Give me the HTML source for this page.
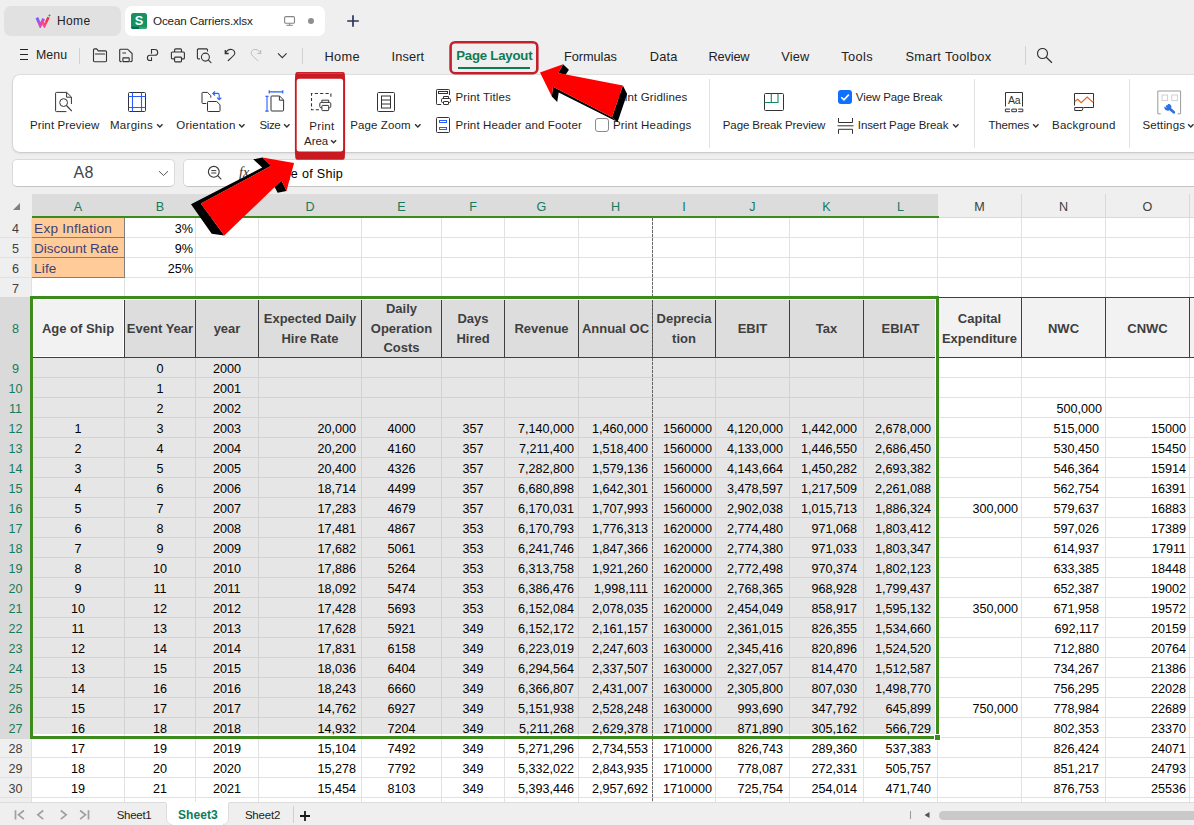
<!DOCTYPE html>
<html lang="en"><head><meta charset="utf-8"><title>Ocean Carriers.xlsx</title>
<style>
html,body{margin:0;padding:0}
body{width:1194px;height:825px;overflow:hidden;background:#efefef;font-family:"Liberation Sans",sans-serif;position:relative}
.b{position:absolute;box-sizing:border-box}
.t{position:absolute;white-space:nowrap}
.c{position:absolute;white-space:nowrap;font-size:12.6px;line-height:20px;height:20px;color:#000}
.h{position:absolute;font-size:13px;line-height:19.65px;font-weight:700;color:#3f3f3f;text-align:center;display:flex;align-items:center;justify-content:center;padding-top:2px}
.rn{position:absolute;left:0;width:31px;text-align:center;font-size:12.6px;line-height:20px;height:20px;color:#404040}
.cn{position:absolute;top:197px;text-align:center;font-size:12.6px;line-height:20px;height:20px;color:#404040}
.g{color:#167a5b}
</style></head>
<body>
<div class="b" style="left:4px;top:6px;width:117px;height:30px;background:#e1e1e1;border-radius:7px"></div>
<div class="b" style="left:125px;top:6px;width:200px;height:30px;background:#fff;border-radius:7px"></div>
<svg class="b" style="left:35px;top:13px;" width="17" height="15" viewBox="0 0 17 15" fill="none"><defs><linearGradient id="wg1" x1="0" y1="0" x2=".6" y2="1"><stop offset="0" stop-color="#6a63ff"/><stop offset="1" stop-color="#ee3fb8"/></linearGradient><linearGradient id="wg2" x1="0" y1="1" x2="1" y2="0"><stop offset="0" stop-color="#ff4fa8"/><stop offset="1" stop-color="#ff2626"/></linearGradient></defs>
<path d="M1.9 4.6L5.3 12.600 8.700 5.600" stroke="url(#wg1)" stroke-width="2.900" stroke-linejoin="miter"/>
<path d="M6.900 8.300L9.400 13 13.500 4.300" stroke="url(#wg2)" stroke-width="2.500" stroke-linejoin="miter"/>
<path d="M14.500 .8l.5 1.100 1.100 .5-1.100 .5-.5 1.100-.5-1.100-1.100-.5 1.100-.5z" fill="#ff3b4e"/></svg>
<div id="L1" class="t" style="left:56.90px;top:12.84px;font-size:12px;line-height:16px;color:#222;font-weight:400;letter-spacing:0.421px;">Home</div>
<svg class="b" style="left:131px;top:13px;" width="16" height="16" viewBox="0 0 16 16" fill="none"><clipPath id="sc"><rect width="16" height="16" rx="2.6"/></clipPath><g clip-path="url(#sc)"><rect width="16" height="16" fill="#14925f"/><rect y="13.800" width="8" height="2.200" fill="#0b6b45"/><rect x="8" y="13.800" width="8" height="2.200" fill="#2ea873"/></g>
<text x="8" y="11.600" text-anchor="middle" font-family="Liberation Sans, sans-serif" font-weight="700" font-size="12.800" fill="#fff">S</text></svg>
<div id="L2" class="t" style="left:153.00px;top:12.95px;font-size:11.7px;line-height:16px;color:#222;font-weight:400;letter-spacing:-0.159px;">Ocean Carriers.xlsx</div>
<svg class="b" style="left:283px;top:15px;" width="14" height="12" viewBox="0 0 14 12" fill="none"><rect x="1.600" y="1.600" width="9.900" height="6.700" rx="1.300" stroke="#858585" stroke-width="1.100"/><path d="M6.550 8.300v2M3.300 10.300h6.500" stroke="#858585" stroke-width="1"/></svg>
<div class="b" style="left:308px;top:18px;width:6.4px;height:6.4px;background:#8e8e8e;border-radius:50%"></div>
<svg class="b" style="left:346px;top:14px;" width="14" height="14" viewBox="0 0 14 14" fill="none"><path d="M7 1.2v11.6M1.2 7h11.6" stroke="#2b3657" stroke-width="1.7"/></svg>
<svg class="b" style="left:19px;top:48px;" width="10" height="13" viewBox="0 0 10 13" fill="none"><path d="M1 1.5h8M1 6.5h8M1 11.5h8" stroke="#222" stroke-width="1"/></svg>
<div id="L3" class="t" style="left:35.90px;top:46.94px;font-size:12.3px;line-height:16px;color:#222;font-weight:400;letter-spacing:0.109px;">Menu</div>
<div class="b" style="left:79px;top:47.5px;width:1px;height:16.5px;background:#d2d2d2"></div>
<svg class="b" style="left:92px;top:47.5px;" width="16" height="15" viewBox="0 0 16 15" fill="none"><path d="M1.5 2a1.1 1.1 0 0 1 1.1-1.1H4.6L6.3 2.9H13.4a1.1 1.1 0 0 1 1.1 1.1V12.7a1.1 1.1 0 0 1-1.1 1.1H2.6a1.1 1.1 0 0 1-1.1-1.1z" stroke="#333" stroke-width="1.1"/><path d="M3.4 6H12.6" stroke="#333" stroke-width="1.1" stroke-linecap="round"/></svg>
<svg class="b" style="left:118px;top:47.5px;" width="16" height="15" viewBox="0 0 16 15" fill="none"><path d="M3.2 13.6H2.7a1 1 0 0 1-1-1V2.2a1 1 0 0 1 1-1H9.6L14.1 5.6V12.6a1 1 0 0 1-1 1H12.6" stroke="#333" stroke-width="1.1" stroke-linecap="round"/><path d="M4.4 5H8" stroke="#333" stroke-width="1"/><rect x="4.9" y="9.9" width="6.3" height="3.7" rx=".4" stroke="#333" stroke-width="1.1"/></svg>
<svg class="b" style="left:146px;top:48px;" width="13" height="14" viewBox="0 0 13 14" fill="none"><path d="M5.5 5.8V1.5H8.8A2.9 2.9 0 0 1 8.8 7.3H4A2.6 2.6 0 0 0 4 12.5H5.5V9.2" stroke="#333" stroke-width="1.1"/></svg>
<svg class="b" style="left:170px;top:47.5px;" width="16" height="15" viewBox="0 0 16 15" fill="none"><path d="M4 10.9H2.4a1 1 0 0 1-1-1V5a1 1 0 0 1 1-1H13.4a1 1 0 0 1 1 1V9.9a1 1 0 0 1-1 1H11.8" stroke="#333" stroke-width="1.1" stroke-linecap="round"/><path d="M4.6 4V1.9a1 1 0 0 1 1-1H10.5a1 1 0 0 1 1 1V4" stroke="#333" stroke-width="1.1"/><rect x="4.6" y="9.1" width="6.9" height="4.8" rx=".8" stroke="#333" stroke-width="1.1"/></svg>
<svg class="b" style="left:196px;top:47.5px;" width="17" height="16" viewBox="0 0 17 16" fill="none"><path d="M3.5 10.900H2.400a1 1 0 0 1-1-1V1.900a1 1 0 0 1 1-1H10.500a1 1 0 0 1 1 1V3" stroke="#333" stroke-width="1.1" stroke-linecap="round"/><circle cx="9.4" cy="9.1" r="4" stroke="#333" stroke-width="1.1"/><path d="M12.4 12.2L15 14.600" stroke="#333" stroke-width="1.1" stroke-linecap="round"/></svg>
<svg class="b" style="left:224px;top:48px;" width="13" height="14" viewBox="0 0 13 14" fill="none"><path d="M1.3 2V5.500H4.700" stroke="#333" stroke-width="1.3"/><path d="M1.700 5C3 2.400 5.500 1.100 7.700 1.500C10.300 2 11.500 4.500 10.400 6.600C9.600 8 6 11 3.800 12.900" stroke="#333" stroke-width="1.1"/></svg>
<svg class="b" style="left:250px;top:48px;" width="13" height="14" viewBox="0 0 13 14" fill="none"><path d="M10.700 2V5.500H7.300" stroke="#bdbdbd" stroke-width="1.2"/><path d="M10.300 5C9 2.400 6.500 1.100 4.300 1.500C1.700 2 .5 4.500 1.600 6.600C2.400 8 6 11 8.200 12.900" stroke="#bdbdbd" stroke-width="1"/></svg>
<svg class="b" style="left:277px;top:52px;" width="11" height="8" viewBox="0 0 11 8" fill="none"><path d="M1 1.400l4.300 4.300 4.300-4.300" stroke="#333" stroke-width="1.100"/></svg>
<div class="b" style="left:302px;top:47.5px;width:1px;height:16.5px;background:#d2d2d2"></div>
<div id="L4" class="t" style="left:324.60px;top:48.56px;font-size:12.8px;line-height:16px;color:#222;font-weight:400;letter-spacing:0.265px;">Home</div>
<div id="L5" class="t" style="left:391.60px;top:48.56px;font-size:12.8px;line-height:16px;color:#222;font-weight:400;letter-spacing:0.114px;">Insert</div>
<div id="L6" class="t" style="left:456.20px;top:48.03px;font-size:13.2px;line-height:16px;color:#107a57;font-weight:700;letter-spacing:-0.202px;">Page Layout</div>
<div class="b" style="left:458px;top:67px;width:72px;height:2px;background:#107a57"></div>
<div id="L7" class="t" style="left:563.90px;top:48.56px;font-size:12.8px;line-height:16px;color:#222;font-weight:400;letter-spacing:-0.055px;">Formulas</div>
<div id="L8" class="t" style="left:649.80px;top:48.56px;font-size:12.8px;line-height:16px;color:#222;font-weight:400;letter-spacing:0.167px;">Data</div>
<div id="L9" class="t" style="left:708.50px;top:48.56px;font-size:12.8px;line-height:16px;color:#222;font-weight:400;letter-spacing:-0.178px;">Review</div>
<div id="L10" class="t" style="left:781.30px;top:48.56px;font-size:12.8px;line-height:16px;color:#222;font-weight:400;letter-spacing:0.146px;">View</div>
<div id="L11" class="t" style="left:841.30px;top:48.56px;font-size:12.8px;line-height:16px;color:#222;font-weight:400;letter-spacing:0.385px;">Tools</div>
<div id="L12" class="t" style="left:905.40px;top:48.56px;font-size:12.8px;line-height:16px;color:#222;font-weight:400;letter-spacing:0.349px;">Smart Toolbox</div>
<div class="b" style="left:1025px;top:46px;width:1px;height:18.5px;background:#d2d2d2"></div>
<svg class="b" style="left:1036px;top:48px;" width="18" height="16" viewBox="0 0 18 16" fill="none"><circle cx="6.500" cy="5.500" r="5" stroke="#333" stroke-width="1.150"/><path d="M10.300 9.200L15.900 14.700" stroke="#333" stroke-width="1.250"/></svg>
<div class="b" style="left:13px;top:75px;width:1200px;height:77px;background:#fff;border-radius:7px;box-shadow:0 0 0 1px rgba(0,0,0,.05),0 1px 3px rgba(0,0,0,.14)"></div>
<svg class="b" style="left:54px;top:90.5px;" width="20" height="22" viewBox="0 0 20 22" fill="none"><path d="M17.400 13v-7l-4.700-4.600h-10.300a.8 .8 0 0 0-.8 .8v17.600a.8 .8 0 0 0 .8 .8h10" stroke="#333" stroke-width="1"/><path d="M12.600 1.600v4.600h4.600" stroke="#333" stroke-width="1"/><circle cx="9.600" cy="11.600" r="3.900" stroke="#333" stroke-width="1"/><path d="M12.500 14.500l5.300 5.600" stroke="#333" stroke-width="1.100"/></svg>
<div id="L13" class="t" style="left:29.90px;top:116.62px;font-size:11.5px;line-height:16px;color:#1f1f1f;font-weight:400;letter-spacing:0.135px;">Print Preview</div>
<svg class="b" style="left:127px;top:90.5px;" width="20" height="22" viewBox="0 0 20 22" fill="none"><rect x="1.500" y="1.500" width="17" height="19" rx="1" stroke="#333" stroke-width="1"/><path d="M5.500 1.500v19M14.500 1.500v19M1.500 5.500h17M1.500 16.500h17" stroke="#2a5bff" stroke-width="1.100"/></svg>
<div id="L14" class="t" style="left:109.90px;top:116.62px;font-size:11.5px;line-height:16px;color:#1f1f1f;font-weight:400;letter-spacing:0.313px;">Margins</div>
<svg class="b" style="left:155.5px;top:122.6px;" width="8" height="6" viewBox="0 0 8 6" fill="none"><path d="M1.100 1.200l2.700 2.700 2.700-2.700" stroke="#333" stroke-width="1.450"/></svg>
<svg class="b" style="left:200px;top:90px;" width="22" height="22" viewBox="0 0 22 22" fill="none"><path d="M6.300 13.500h-3.500a.8 .8 0 0 1-.8-.8v-9.500a.8 .8 0 0 1 .8-.8h4.700l3.300 3.300v2" stroke="#333" stroke-width="1"/><path d="M7.500 20.700v-8.400a.8 .8 0 0 1 .8-.8h8.400l3.300 3.300v5.900a.8 .8 0 0 1-.8 .8h-10.900a.8 .8 0 0 1-.8-.8z" stroke="#333" stroke-width="1"/><path d="M13 3.400h4.600a1.600 1.600 0 0 1 1.600 1.600v4.600M15 1.300l-2.200 2.100 2.200 2.100M17.100 7.600l2.100 2.200 2.100-2.200" stroke="#2a5bff" stroke-width="1.100"/></svg>
<div id="L15" class="t" style="left:176.20px;top:116.62px;font-size:11.5px;line-height:16px;color:#1f1f1f;font-weight:400;letter-spacing:0.285px;">Orientation</div>
<svg class="b" style="left:238.3px;top:122.6px;" width="8" height="6" viewBox="0 0 8 6" fill="none"><path d="M1.100 1.200l2.700 2.700 2.700-2.700" stroke="#333" stroke-width="1.450"/></svg>
<svg class="b" style="left:265px;top:90px;" width="21" height="22" viewBox="0 0 21 22" fill="none"><path d="M4.200 1.900h13.600M4.200 .2v3.400M17.800 .2v3.400M2 6.300v14.800M.3 6.300h3.400M.3 21.100h3.400" stroke="#2a5bff" stroke-width="1.100"/><path d="M6 6.800a.8 .8 0 0 1 .8-.8h7.800l4 4v10.200a.8 .8 0 0 1-.8 .8h-11a.8 .8 0 0 1-.8-.8z" stroke="#333" stroke-width="1"/><path d="M14.400 6.200v4h4" stroke="#333" stroke-width="1"/></svg>
<div id="L16" class="t" style="left:259.40px;top:116.62px;font-size:11.5px;line-height:16px;color:#1f1f1f;font-weight:400;letter-spacing:-0.344px;">Size</div>
<svg class="b" style="left:283px;top:122.6px;" width="8" height="6" viewBox="0 0 8 6" fill="none"><path d="M1.100 1.200l2.700 2.700 2.700-2.700" stroke="#333" stroke-width="1.450"/></svg>
<svg class="b" style="left:310px;top:92px;" width="23" height="20" viewBox="0 0 23 20" fill="none"><path d="M9 17.800h-7.500v-16.300h19.400v5.500" stroke="#333" stroke-width="1.100" stroke-dasharray="3.200 2.200"/><path d="M11.900 10.400v-2.200h6.800v2.200" stroke="#333" stroke-width="1"/><rect x="9.800" y="10.400" width="11" height="5.400" rx="1.500" stroke="#333" stroke-width="1"/><rect x="11.900" y="13.400" width="6.800" height="5.200" rx=".7" fill="#fff" stroke="#333" stroke-width="1"/></svg>
<div id="L17" class="t" style="left:309.20px;top:117.62px;font-size:11.5px;line-height:16px;color:#1f1f1f;font-weight:400;letter-spacing:0.349px;">Print</div>
<div id="L18" class="t" style="left:304.00px;top:132.62px;font-size:11.5px;line-height:16px;color:#1f1f1f;font-weight:400;letter-spacing:-0.024px;">Area</div>
<svg class="b" style="left:330px;top:138.7px;" width="8" height="6" viewBox="0 0 8 6" fill="none"><path d="M1.100 1.200l2.500 2.500 2.500-2.500" stroke="#333" stroke-width="1.450"/></svg>
<svg class="b" style="left:376px;top:90.5px;" width="20" height="22" viewBox="0 0 20 22" fill="none"><rect x="1.500" y="1.500" width="17" height="19" rx="1" stroke="#333" stroke-width="1"/><rect x="5.500" y="5" width="9" height="12" stroke="#333" stroke-width="1"/><path d="M5.500 9h9M5.500 13h9" stroke="#333" stroke-width="1"/></svg>
<div id="L19" class="t" style="left:350.20px;top:116.62px;font-size:11.5px;line-height:16px;color:#1f1f1f;font-weight:400;letter-spacing:0.105px;">Page Zoom</div>
<svg class="b" style="left:413.5px;top:122.6px;" width="8" height="6" viewBox="0 0 8 6" fill="none"><path d="M1.100 1.200l2.700 2.700 2.700-2.700" stroke="#333" stroke-width="1.450"/></svg>
<svg class="b" style="left:435px;top:88px;" width="18" height="18" viewBox="0 0 18 18" fill="none"><path d="M5.800 16.500H2.300a.8 .8 0 0 1-.8-.8V2.300a.8 .8 0 0 1 .8-.8H13.700a.8 .8 0 0 1 .8 .8V6.500" stroke="#333" stroke-width="1" stroke-linecap="round"/><rect x="3.500" y="3.500" width="9" height="2" stroke="#333" stroke-width="1"/><path d="M8.500 10.500V8.500H13.500V10.500" stroke="#333" stroke-width="1"/><rect x="6.500" y="10.500" width="9" height="4" rx="1.200" stroke="#333" stroke-width="1"/><rect x="8.500" y="13.500" width="5" height="3" rx=".4" fill="#fff" stroke="#333" stroke-width="1"/></svg>
<div id="L20" class="t" style="left:455.40px;top:88.52px;font-size:11.5px;line-height:16px;color:#1f1f1f;font-weight:400;letter-spacing:0.151px;">Print Titles</div>
<svg class="b" style="left:435px;top:116px;" width="16" height="18" viewBox="0 0 16 18" fill="none"><rect x="1.500" y="1.500" width="13" height="15" rx="1" stroke="#333" stroke-width="1"/><rect x="4.500" y="4.500" width="7" height="2" stroke="#2a5bff" stroke-width="1"/><rect x="4.500" y="11.500" width="7" height="2" stroke="#2a5bff" stroke-width="1"/></svg>
<div id="L21" class="t" style="left:455.40px;top:116.62px;font-size:11.5px;line-height:16px;color:#1f1f1f;font-weight:400;letter-spacing:0.136px;">Print Header and Footer</div>
<div class="b" style="left:595px;top:90px;width:14px;height:14px;border:1px solid #8a8a8a;border-radius:3px;background:#fff"></div>
<div id="L22" class="t" style="left:612.90px;top:88.52px;font-size:11.5px;line-height:16px;color:#1f1f1f;font-weight:400;letter-spacing:0.159px;">Print Gridlines</div>
<div class="b" style="left:595px;top:118px;width:14px;height:14px;border:1px solid #8a8a8a;border-radius:3px;background:#fff"></div>
<div id="L23" class="t" style="left:612.90px;top:116.62px;font-size:11.5px;line-height:16px;color:#1f1f1f;font-weight:400;letter-spacing:0.226px;">Print Headings</div>
<div class="b" style="left:709px;top:79px;width:1px;height:68.5px;background:#e2e2e2"></div>
<svg class="b" style="left:763px;top:92px;" width="22" height="20" viewBox="0 0 22 20" fill="none"><rect x="1.500" y="1.500" width="19" height="17" rx="1" stroke="#333" stroke-width="1"/><path d="M1.500 10.500h13.500v-9M8.300 1.500v9" stroke="#14875d" stroke-width="1.100"/></svg>
<div id="L24" class="t" style="left:722.80px;top:116.62px;font-size:11.5px;line-height:16px;color:#1f1f1f;font-weight:400;letter-spacing:-0.095px;">Page Break Preview</div>
<svg class="b" style="left:838px;top:90px;" width="14" height="14" viewBox="0 0 14 14" fill="none"><rect width="14" height="14" rx="3" fill="#0f6fff"/><path d="M3.300 7.200l2.700 2.700 4.800-5.300" stroke="#fff" stroke-width="1.600"/></svg>
<div id="L25" class="t" style="left:855.80px;top:88.52px;font-size:11.5px;line-height:16px;color:#1f1f1f;font-weight:400;letter-spacing:-0.094px;">View Page Break</div>
<svg class="b" style="left:837px;top:116.5px;" width="18" height="18" viewBox="0 0 18 18" fill="none"><path d="M1.500 1v4.500h14v-4.500M.5 8.800h16M1.500 16.800v-4.500h14v4.500" stroke="#333" stroke-width="1"/></svg>
<div id="L26" class="t" style="left:857.80px;top:116.62px;font-size:11.5px;line-height:16px;color:#1f1f1f;font-weight:400;letter-spacing:-0.092px;">Insert Page Break</div>
<svg class="b" style="left:952.3px;top:122.6px;" width="8" height="6" viewBox="0 0 8 6" fill="none"><path d="M1.100 1.200l2.700 2.700 2.700-2.700" stroke="#333" stroke-width="1.450"/></svg>
<div class="b" style="left:974px;top:79px;width:1px;height:68.5px;background:#e2e2e2"></div>
<svg class="b" style="left:1004px;top:90.5px;" width="20" height="22" viewBox="0 0 20 22" fill="none"><path d="M1.500 15.500v-14h17v14" stroke="#333" stroke-width="1"/><path d="M6 18.100h-4.600v2.600h4.600M7.800 18.100h4.600v2.600h-4.600zM14.200 18.100h4.600v2.600h-4.600" stroke="#333" stroke-width="1"/><text x="10.100" y="13" text-anchor="middle" font-family="Liberation Sans, sans-serif" font-size="10.500" letter-spacing="-.4" fill="#333">Aa</text></svg>
<div id="L27" class="t" style="left:988.40px;top:116.62px;font-size:11.5px;line-height:16px;color:#1f1f1f;font-weight:400;letter-spacing:-0.158px;">Themes</div>
<svg class="b" style="left:1031.5px;top:122.6px;" width="8" height="6" viewBox="0 0 8 6" fill="none"><path d="M1.100 1.200l2.700 2.700 2.700-2.700" stroke="#333" stroke-width="1.450"/></svg>
<svg class="b" style="left:1073px;top:92px;" width="22" height="20" viewBox="0 0 22 20" fill="none"><path d="M10.700 15.500h9.800v-14h-19v12" stroke="#333" stroke-width="1"/><path d="M1.700 18.500h7.300l1.300-3h-8.600z" stroke="#333" stroke-width="1"/><path d="M1.700 9.500L4.800 7.300 8.200 10.700 14.200 5 19.500 10 20.700 8.700" stroke="#e0661f" stroke-width="1.100"/></svg>
<div id="L28" class="t" style="left:1052.00px;top:116.62px;font-size:11.5px;line-height:16px;color:#1f1f1f;font-weight:400;letter-spacing:0.223px;">Background</div>
<div class="b" style="left:1129px;top:79px;width:1px;height:68.5px;background:#e2e2e2"></div>
<svg class="b" style="left:1157px;top:89.5px;" width="25" height="26" viewBox="0 0 25 26" fill="none"><path d="M3.800 23.800h-3v-22.800h22.800v22.800h-3" stroke="#9a9a9a" stroke-width="1"/><rect x="5" y="5" width="5.600" height="5.600" stroke="#cfcfcf" stroke-width="1"/><rect x="14.800" y="5" width="5.600" height="5.600" stroke="#cfcfcf" stroke-width="1"/><path d="M16.800 22.300l-6.600-5.800" stroke="#2f6fe0" stroke-width="2.700" stroke-linecap="round"/><path d="M12.300 14a3.500 3.500 0 1 1-4.900 2.600l2.300 1.300 1.700-1.400-.8-2.500z" fill="#2f6fe0"/></svg>
<div id="L29" class="t" style="left:1142.40px;top:116.62px;font-size:11.5px;line-height:16px;color:#1f1f1f;font-weight:400;letter-spacing:0.142px;">Settings</div>
<svg class="b" style="left:1187px;top:122.6px;" width="8" height="6" viewBox="0 0 8 6" fill="none"><path d="M1.100 1.200l2.700 2.700 2.700-2.700" stroke="#333" stroke-width="1.450"/></svg>
<div class="b" style="left:12px;top:159px;width:163px;height:28px;background:#fff;border:1px solid #dadada;border-bottom-color:#c4c4c4;border-radius:5px"></div>
<div id="L30" class="t" style="left:73.50px;top:163.26px;font-size:16px;line-height:20px;color:#444;font-weight:400;letter-spacing:0.211px;">A8</div>
<svg class="b" style="left:157.5px;top:170px;" width="11" height="8" viewBox="0 0 11 8" fill="none"><path d="M1 1.200l4.500 4.300 4.500-4.300" stroke="#555" stroke-width="1"/></svg>
<div class="b" style="left:183px;top:159px;width:1030px;height:28px;background:#fff;border:1px solid #dadada;border-bottom-color:#c4c4c4;border-radius:5px"></div>
<svg class="b" style="left:207px;top:165px;" width="16" height="16" viewBox="0 0 16 16" fill="none"><circle cx="6.800" cy="6.800" r="5.400" stroke="#3a3a3a" stroke-width="1.150"/><path d="M4.300 5.600h5M4.300 8h5" stroke="#3a3a3a" stroke-width="1"/><path d="M10.700 10.700l3.600 3.600" stroke="#3a3a3a" stroke-width="1.150"/></svg>
<div class="t" style="left:239px;top:164px;font-size:14px;line-height:18px;font-style:italic;color:#333;font-family:'Liberation Serif',serif">fx</div>
<div id="L31" class="t" style="left:274.90px;top:164.63px;font-size:12.6px;line-height:18px;color:#000;font-weight:400;letter-spacing:0.280px;">Age of Ship</div>
<div class="b" style="left:32px;top:218px;width:1162px;height:584px;background:#fff"></div>
<div class="b" style="left:32px;top:194px;width:906px;height:22px;background:#dcdcdc"></div>
<div class="b" style="left:31px;top:218px;width:1px;height:584px;background:#e1e1e1"></div><div class="b" style="left:124px;top:218px;width:1px;height:584px;background:#e1e1e1"></div><div class="b" style="left:195px;top:218px;width:1px;height:584px;background:#e1e1e1"></div><div class="b" style="left:258px;top:218px;width:1px;height:584px;background:#e1e1e1"></div><div class="b" style="left:361px;top:218px;width:1px;height:584px;background:#e1e1e1"></div><div class="b" style="left:441px;top:218px;width:1px;height:584px;background:#e1e1e1"></div><div class="b" style="left:504px;top:218px;width:1px;height:584px;background:#e1e1e1"></div><div class="b" style="left:578px;top:218px;width:1px;height:584px;background:#e1e1e1"></div><div class="b" style="left:652px;top:218px;width:1px;height:584px;background:#e1e1e1"></div><div class="b" style="left:715px;top:218px;width:1px;height:584px;background:#e1e1e1"></div><div class="b" style="left:789px;top:218px;width:1px;height:584px;background:#e1e1e1"></div><div class="b" style="left:863px;top:218px;width:1px;height:584px;background:#e1e1e1"></div><div class="b" style="left:937px;top:218px;width:1px;height:584px;background:#e1e1e1"></div><div class="b" style="left:1021px;top:218px;width:1px;height:584px;background:#e1e1e1"></div><div class="b" style="left:1105px;top:218px;width:1px;height:584px;background:#e1e1e1"></div><div class="b" style="left:1189px;top:218px;width:1px;height:584px;background:#e1e1e1"></div>
<div class="b" style="left:1021px;top:194px;width:1px;height:24px;background:#d9d9d9"></div>
<div class="b" style="left:1105px;top:194px;width:1px;height:24px;background:#d9d9d9"></div>
<div class="b" style="left:1189px;top:194px;width:1px;height:24px;background:#d9d9d9"></div>
<div class="b" style="left:938px;top:217px;width:256px;height:1px;background:#d9d9d9"></div>
<div class="b" style="left:0;top:237px;width:1194px;height:1px;background:#e1e1e1"></div><div class="b" style="left:0;top:257px;width:1194px;height:1px;background:#e1e1e1"></div><div class="b" style="left:0;top:277px;width:1194px;height:1px;background:#e1e1e1"></div><div class="b" style="left:0;top:297px;width:1194px;height:1px;background:#e1e1e1"></div><div class="b" style="left:0;top:357px;width:1194px;height:1px;background:#e1e1e1"></div><div class="b" style="left:0;top:377px;width:1194px;height:1px;background:#e1e1e1"></div><div class="b" style="left:0;top:397px;width:1194px;height:1px;background:#e1e1e1"></div><div class="b" style="left:0;top:417px;width:1194px;height:1px;background:#e1e1e1"></div><div class="b" style="left:0;top:437px;width:1194px;height:1px;background:#e1e1e1"></div><div class="b" style="left:0;top:457px;width:1194px;height:1px;background:#e1e1e1"></div><div class="b" style="left:0;top:477px;width:1194px;height:1px;background:#e1e1e1"></div><div class="b" style="left:0;top:497px;width:1194px;height:1px;background:#e1e1e1"></div><div class="b" style="left:0;top:517px;width:1194px;height:1px;background:#e1e1e1"></div><div class="b" style="left:0;top:537px;width:1194px;height:1px;background:#e1e1e1"></div><div class="b" style="left:0;top:557px;width:1194px;height:1px;background:#e1e1e1"></div><div class="b" style="left:0;top:577px;width:1194px;height:1px;background:#e1e1e1"></div><div class="b" style="left:0;top:597px;width:1194px;height:1px;background:#e1e1e1"></div><div class="b" style="left:0;top:617px;width:1194px;height:1px;background:#e1e1e1"></div><div class="b" style="left:0;top:637px;width:1194px;height:1px;background:#e1e1e1"></div><div class="b" style="left:0;top:657px;width:1194px;height:1px;background:#e1e1e1"></div><div class="b" style="left:0;top:677px;width:1194px;height:1px;background:#e1e1e1"></div><div class="b" style="left:0;top:697px;width:1194px;height:1px;background:#e1e1e1"></div><div class="b" style="left:0;top:717px;width:1194px;height:1px;background:#e1e1e1"></div><div class="b" style="left:0;top:737px;width:1194px;height:1px;background:#e1e1e1"></div><div class="b" style="left:0;top:757px;width:1194px;height:1px;background:#e1e1e1"></div><div class="b" style="left:0;top:777px;width:1194px;height:1px;background:#e1e1e1"></div><div class="b" style="left:0;top:797px;width:1194px;height:1px;background:#e1e1e1"></div>
<div class="b" style="left:33px;top:299px;width:902px;height:435px;background:#e6e6e6;overflow:hidden"><div class="b" style="left:91px;top:0;width:1px;height:435px;background:#d2d2d2"></div><div class="b" style="left:162px;top:0;width:1px;height:435px;background:#d2d2d2"></div><div class="b" style="left:225px;top:0;width:1px;height:435px;background:#d2d2d2"></div><div class="b" style="left:328px;top:0;width:1px;height:435px;background:#d2d2d2"></div><div class="b" style="left:408px;top:0;width:1px;height:435px;background:#d2d2d2"></div><div class="b" style="left:471px;top:0;width:1px;height:435px;background:#d2d2d2"></div><div class="b" style="left:545px;top:0;width:1px;height:435px;background:#d2d2d2"></div><div class="b" style="left:619px;top:0;width:1px;height:435px;background:#d2d2d2"></div><div class="b" style="left:682px;top:0;width:1px;height:435px;background:#d2d2d2"></div><div class="b" style="left:756px;top:0;width:1px;height:435px;background:#d2d2d2"></div><div class="b" style="left:830px;top:0;width:1px;height:435px;background:#d2d2d2"></div><div class="b" style="left:0;top:58px;width:902px;height:1px;background:#d2d2d2"></div><div class="b" style="left:0;top:78px;width:902px;height:1px;background:#d2d2d2"></div><div class="b" style="left:0;top:98px;width:902px;height:1px;background:#d2d2d2"></div><div class="b" style="left:0;top:118px;width:902px;height:1px;background:#d2d2d2"></div><div class="b" style="left:0;top:138px;width:902px;height:1px;background:#d2d2d2"></div><div class="b" style="left:0;top:158px;width:902px;height:1px;background:#d2d2d2"></div><div class="b" style="left:0;top:178px;width:902px;height:1px;background:#d2d2d2"></div><div class="b" style="left:0;top:198px;width:902px;height:1px;background:#d2d2d2"></div><div class="b" style="left:0;top:218px;width:902px;height:1px;background:#d2d2d2"></div><div class="b" style="left:0;top:238px;width:902px;height:1px;background:#d2d2d2"></div><div class="b" style="left:0;top:258px;width:902px;height:1px;background:#d2d2d2"></div><div class="b" style="left:0;top:278px;width:902px;height:1px;background:#d2d2d2"></div><div class="b" style="left:0;top:298px;width:902px;height:1px;background:#d2d2d2"></div><div class="b" style="left:0;top:318px;width:902px;height:1px;background:#d2d2d2"></div><div class="b" style="left:0;top:338px;width:902px;height:1px;background:#d2d2d2"></div><div class="b" style="left:0;top:358px;width:902px;height:1px;background:#d2d2d2"></div><div class="b" style="left:0;top:378px;width:902px;height:1px;background:#d2d2d2"></div><div class="b" style="left:0;top:398px;width:902px;height:1px;background:#d2d2d2"></div><div class="b" style="left:0;top:418px;width:902px;height:1px;background:#d2d2d2"></div></div>
<div class="b" style="left:0px;top:297px;width:30px;height:442px;background:#dadada"></div>
<div class="cn g" style="left:32px;width:92px">A</div>
<div class="cn g" style="left:125px;width:70px">B</div>
<div class="cn g" style="left:196px;width:62px">C</div>
<div class="cn g" style="left:259px;width:102px">D</div>
<div class="cn g" style="left:362px;width:79px">E</div>
<div class="cn g" style="left:442px;width:62px">F</div>
<div class="cn g" style="left:505px;width:73px">G</div>
<div class="cn g" style="left:579px;width:73px">H</div>
<div class="cn g" style="left:653px;width:62px">I</div>
<div class="cn g" style="left:716px;width:73px">J</div>
<div class="cn g" style="left:790px;width:73px">K</div>
<div class="cn g" style="left:864px;width:73px">L</div>
<div class="cn" style="left:938px;width:83px">M</div>
<div class="cn" style="left:1022px;width:83px">N</div>
<div class="cn" style="left:1106px;width:83px">O</div>
<svg class="b" style="left:12px;top:202px;" width="9" height="9" viewBox="0 0 9 9" fill="none"><path d="M8 1v7h-7z" fill="#808080"/></svg>
<div class="rn" style="top:219px">4</div>
<div class="rn" style="top:239px">5</div>
<div class="rn" style="top:259px">6</div>
<div class="rn" style="top:279px">7</div>
<div class="rn g" style="top:319px">8</div>
<div class="rn g" style="top:359px">9</div>
<div class="rn g" style="top:379px">10</div>
<div class="rn g" style="top:399px">11</div>
<div class="rn g" style="top:419px">12</div>
<div class="rn g" style="top:439px">13</div>
<div class="rn g" style="top:459px">14</div>
<div class="rn g" style="top:479px">15</div>
<div class="rn g" style="top:499px">16</div>
<div class="rn g" style="top:519px">17</div>
<div class="rn g" style="top:539px">18</div>
<div class="rn g" style="top:559px">19</div>
<div class="rn g" style="top:579px">20</div>
<div class="rn g" style="top:599px">21</div>
<div class="rn g" style="top:619px">22</div>
<div class="rn g" style="top:639px">23</div>
<div class="rn g" style="top:659px">24</div>
<div class="rn g" style="top:679px">25</div>
<div class="rn g" style="top:699px">26</div>
<div class="rn g" style="top:719px">27</div>
<div class="rn" style="top:739px">28</div>
<div class="rn" style="top:759px">29</div>
<div class="rn" style="top:779px">30</div>
<div class="b" style="left:32px;top:218px;width:93px;height:20px;background:#ffcc99;border-right:1px solid #7f7f7f;border-bottom:1px solid #7f7f7f"></div>
<div class="b" style="left:32px;top:238px;width:93px;height:20px;background:#ffcc99;border-right:1px solid #7f7f7f;border-bottom:1px solid #7f7f7f"></div>
<div class="b" style="left:32px;top:258px;width:93px;height:20px;background:#ffcc99;border-right:1px solid #7f7f7f;border-bottom:1px solid #7f7f7f"></div>
<div id="L32" class="t" style="left:34.10px;top:218.89px;font-size:13.6px;line-height:20px;color:#3f3f76;font-weight:400;letter-spacing:0.238px;">Exp Inflation</div>
<div id="L33" class="t" style="left:34.10px;top:238.89px;font-size:13.6px;line-height:20px;color:#3f3f76;font-weight:400;letter-spacing:-0.076px;">Discount Rate</div>
<div id="L34" class="t" style="left:34.10px;top:258.89px;font-size:13.6px;line-height:20px;color:#3f3f76;font-weight:400;letter-spacing:0.120px;">Life</div>
<div class="c" style="left:125px;width:68px;text-align:right;top:219px">3%</div>
<div class="c" style="left:125px;width:68px;text-align:right;top:239px">9%</div>
<div class="c" style="left:125px;width:68px;text-align:right;top:259px">25%</div>
<div class="h b" style="left:31px;top:297px;width:94px;height:61px;background:#f2f2f2;border:1px solid #3f3f3f"><span>Age of Ship</span></div>
<div class="h b" style="left:124px;top:297px;width:72px;height:61px;background:#dddddd;border:1px solid #3f3f3f"><span>Event Year</span></div>
<div class="h b" style="left:195px;top:297px;width:64px;height:61px;background:#dddddd;border:1px solid #3f3f3f"><span>year</span></div>
<div class="h b" style="left:258px;top:297px;width:104px;height:61px;background:#dddddd;border:1px solid #3f3f3f"><span>Expected Daily<br>Hire Rate</span></div>
<div class="h b" style="left:361px;top:297px;width:81px;height:61px;background:#dddddd;border:1px solid #3f3f3f"><span>Daily<br>Operation<br>Costs</span></div>
<div class="h b" style="left:441px;top:297px;width:64px;height:61px;background:#dddddd;border:1px solid #3f3f3f"><span>Days<br>Hired</span></div>
<div class="h b" style="left:504px;top:297px;width:75px;height:61px;background:#dddddd;border:1px solid #3f3f3f"><span>Revenue</span></div>
<div class="h b" style="left:578px;top:297px;width:75px;height:61px;background:#dddddd;border:1px solid #3f3f3f"><span>Annual OC</span></div>
<div class="h b" style="left:652px;top:297px;width:64px;height:61px;background:#dddddd;border:1px solid #3f3f3f"><span>Deprecia<br>tion</span></div>
<div class="h b" style="left:715px;top:297px;width:75px;height:61px;background:#dddddd;border:1px solid #3f3f3f"><span>EBIT</span></div>
<div class="h b" style="left:789px;top:297px;width:75px;height:61px;background:#dddddd;border:1px solid #3f3f3f"><span>Tax</span></div>
<div class="h b" style="left:863px;top:297px;width:75px;height:61px;background:#dddddd;border:1px solid #3f3f3f"><span>EBIAT</span></div>
<div class="h b" style="left:937px;top:297px;width:85px;height:61px;background:#f2f2f2;border:1px solid #3f3f3f"><span>Capital<br>Expenditure</span></div>
<div class="h b" style="left:1021px;top:297px;width:85px;height:61px;background:#f2f2f2;border:1px solid #3f3f3f"><span>NWC</span></div>
<div class="h b" style="left:1105px;top:297px;width:85px;height:61px;background:#f2f2f2;border:1px solid #3f3f3f"><span>CNWC</span></div>
<div class="b" style="left:1189px;top:297px;width:10px;height:61px;background:#f2f2f2;border:1px solid #3f3f3f"></div>
<div class="c" style="left:125px;width:70px;text-align:center;top:359px">0</div>
<div class="c" style="left:196px;width:62px;text-align:center;top:359px">2000</div>
<div class="c" style="left:125px;width:70px;text-align:center;top:379px">1</div>
<div class="c" style="left:196px;width:62px;text-align:center;top:379px">2001</div>
<div class="c" style="left:125px;width:70px;text-align:center;top:399px">2</div>
<div class="c" style="left:196px;width:62px;text-align:center;top:399px">2002</div>
<div class="c" style="left:1022px;width:80px;text-align:right;top:399px">500,000</div>
<div class="c" style="left:32px;width:92px;text-align:center;top:419px">1</div>
<div class="c" style="left:125px;width:70px;text-align:center;top:419px">3</div>
<div class="c" style="left:196px;width:62px;text-align:center;top:419px">2003</div>
<div class="c" style="left:259px;width:97px;text-align:right;top:419px">20,000</div>
<div class="c" style="left:362px;width:79px;text-align:center;top:419px">4000</div>
<div class="c" style="left:442px;width:62px;text-align:center;top:419px">357</div>
<div class="c" style="left:505px;width:69px;text-align:right;top:419px">7,140,000</div>
<div class="c" style="left:579px;width:69px;text-align:right;top:419px">1,460,000</div>
<div class="c" style="left:653px;width:59px;text-align:right;top:419px">1560000</div>
<div class="c" style="left:716px;width:67px;text-align:right;top:419px">4,120,000</div>
<div class="c" style="left:790px;width:67px;text-align:right;top:419px">1,442,000</div>
<div class="c" style="left:864px;width:67px;text-align:right;top:419px">2,678,000</div>
<div class="c" style="left:1022px;width:77px;text-align:right;top:419px">515,000</div>
<div class="c" style="left:1106px;width:80px;text-align:right;top:419px">15000</div>
<div class="c" style="left:32px;width:92px;text-align:center;top:439px">2</div>
<div class="c" style="left:125px;width:70px;text-align:center;top:439px">4</div>
<div class="c" style="left:196px;width:62px;text-align:center;top:439px">2004</div>
<div class="c" style="left:259px;width:97px;text-align:right;top:439px">20,200</div>
<div class="c" style="left:362px;width:79px;text-align:center;top:439px">4160</div>
<div class="c" style="left:442px;width:62px;text-align:center;top:439px">357</div>
<div class="c" style="left:505px;width:69px;text-align:right;top:439px">7,211,400</div>
<div class="c" style="left:579px;width:69px;text-align:right;top:439px">1,518,400</div>
<div class="c" style="left:653px;width:59px;text-align:right;top:439px">1560000</div>
<div class="c" style="left:716px;width:67px;text-align:right;top:439px">4,133,000</div>
<div class="c" style="left:790px;width:67px;text-align:right;top:439px">1,446,550</div>
<div class="c" style="left:864px;width:67px;text-align:right;top:439px">2,686,450</div>
<div class="c" style="left:1022px;width:77px;text-align:right;top:439px">530,450</div>
<div class="c" style="left:1106px;width:80px;text-align:right;top:439px">15450</div>
<div class="c" style="left:32px;width:92px;text-align:center;top:459px">3</div>
<div class="c" style="left:125px;width:70px;text-align:center;top:459px">5</div>
<div class="c" style="left:196px;width:62px;text-align:center;top:459px">2005</div>
<div class="c" style="left:259px;width:97px;text-align:right;top:459px">20,400</div>
<div class="c" style="left:362px;width:79px;text-align:center;top:459px">4326</div>
<div class="c" style="left:442px;width:62px;text-align:center;top:459px">357</div>
<div class="c" style="left:505px;width:69px;text-align:right;top:459px">7,282,800</div>
<div class="c" style="left:579px;width:69px;text-align:right;top:459px">1,579,136</div>
<div class="c" style="left:653px;width:59px;text-align:right;top:459px">1560000</div>
<div class="c" style="left:716px;width:67px;text-align:right;top:459px">4,143,664</div>
<div class="c" style="left:790px;width:67px;text-align:right;top:459px">1,450,282</div>
<div class="c" style="left:864px;width:67px;text-align:right;top:459px">2,693,382</div>
<div class="c" style="left:1022px;width:77px;text-align:right;top:459px">546,364</div>
<div class="c" style="left:1106px;width:80px;text-align:right;top:459px">15914</div>
<div class="c" style="left:32px;width:92px;text-align:center;top:479px">4</div>
<div class="c" style="left:125px;width:70px;text-align:center;top:479px">6</div>
<div class="c" style="left:196px;width:62px;text-align:center;top:479px">2006</div>
<div class="c" style="left:259px;width:97px;text-align:right;top:479px">18,714</div>
<div class="c" style="left:362px;width:79px;text-align:center;top:479px">4499</div>
<div class="c" style="left:442px;width:62px;text-align:center;top:479px">357</div>
<div class="c" style="left:505px;width:69px;text-align:right;top:479px">6,680,898</div>
<div class="c" style="left:579px;width:69px;text-align:right;top:479px">1,642,301</div>
<div class="c" style="left:653px;width:59px;text-align:right;top:479px">1560000</div>
<div class="c" style="left:716px;width:67px;text-align:right;top:479px">3,478,597</div>
<div class="c" style="left:790px;width:67px;text-align:right;top:479px">1,217,509</div>
<div class="c" style="left:864px;width:67px;text-align:right;top:479px">2,261,088</div>
<div class="c" style="left:1022px;width:77px;text-align:right;top:479px">562,754</div>
<div class="c" style="left:1106px;width:80px;text-align:right;top:479px">16391</div>
<div class="c" style="left:32px;width:92px;text-align:center;top:499px">5</div>
<div class="c" style="left:125px;width:70px;text-align:center;top:499px">7</div>
<div class="c" style="left:196px;width:62px;text-align:center;top:499px">2007</div>
<div class="c" style="left:259px;width:97px;text-align:right;top:499px">17,283</div>
<div class="c" style="left:362px;width:79px;text-align:center;top:499px">4679</div>
<div class="c" style="left:442px;width:62px;text-align:center;top:499px">357</div>
<div class="c" style="left:505px;width:69px;text-align:right;top:499px">6,170,031</div>
<div class="c" style="left:579px;width:69px;text-align:right;top:499px">1,707,993</div>
<div class="c" style="left:653px;width:59px;text-align:right;top:499px">1560000</div>
<div class="c" style="left:716px;width:67px;text-align:right;top:499px">2,902,038</div>
<div class="c" style="left:790px;width:67px;text-align:right;top:499px">1,015,713</div>
<div class="c" style="left:864px;width:67px;text-align:right;top:499px">1,886,324</div>
<div class="c" style="left:938px;width:80px;text-align:right;top:499px">300,000</div>
<div class="c" style="left:1022px;width:77px;text-align:right;top:499px">579,637</div>
<div class="c" style="left:1106px;width:80px;text-align:right;top:499px">16883</div>
<div class="c" style="left:32px;width:92px;text-align:center;top:519px">6</div>
<div class="c" style="left:125px;width:70px;text-align:center;top:519px">8</div>
<div class="c" style="left:196px;width:62px;text-align:center;top:519px">2008</div>
<div class="c" style="left:259px;width:97px;text-align:right;top:519px">17,481</div>
<div class="c" style="left:362px;width:79px;text-align:center;top:519px">4867</div>
<div class="c" style="left:442px;width:62px;text-align:center;top:519px">353</div>
<div class="c" style="left:505px;width:69px;text-align:right;top:519px">6,170,793</div>
<div class="c" style="left:579px;width:69px;text-align:right;top:519px">1,776,313</div>
<div class="c" style="left:653px;width:59px;text-align:right;top:519px">1620000</div>
<div class="c" style="left:716px;width:67px;text-align:right;top:519px">2,774,480</div>
<div class="c" style="left:790px;width:67px;text-align:right;top:519px">971,068</div>
<div class="c" style="left:864px;width:67px;text-align:right;top:519px">1,803,412</div>
<div class="c" style="left:1022px;width:77px;text-align:right;top:519px">597,026</div>
<div class="c" style="left:1106px;width:80px;text-align:right;top:519px">17389</div>
<div class="c" style="left:32px;width:92px;text-align:center;top:539px">7</div>
<div class="c" style="left:125px;width:70px;text-align:center;top:539px">9</div>
<div class="c" style="left:196px;width:62px;text-align:center;top:539px">2009</div>
<div class="c" style="left:259px;width:97px;text-align:right;top:539px">17,682</div>
<div class="c" style="left:362px;width:79px;text-align:center;top:539px">5061</div>
<div class="c" style="left:442px;width:62px;text-align:center;top:539px">353</div>
<div class="c" style="left:505px;width:69px;text-align:right;top:539px">6,241,746</div>
<div class="c" style="left:579px;width:69px;text-align:right;top:539px">1,847,366</div>
<div class="c" style="left:653px;width:59px;text-align:right;top:539px">1620000</div>
<div class="c" style="left:716px;width:67px;text-align:right;top:539px">2,774,380</div>
<div class="c" style="left:790px;width:67px;text-align:right;top:539px">971,033</div>
<div class="c" style="left:864px;width:67px;text-align:right;top:539px">1,803,347</div>
<div class="c" style="left:1022px;width:77px;text-align:right;top:539px">614,937</div>
<div class="c" style="left:1106px;width:80px;text-align:right;top:539px">17911</div>
<div class="c" style="left:32px;width:92px;text-align:center;top:559px">8</div>
<div class="c" style="left:125px;width:70px;text-align:center;top:559px">10</div>
<div class="c" style="left:196px;width:62px;text-align:center;top:559px">2010</div>
<div class="c" style="left:259px;width:97px;text-align:right;top:559px">17,886</div>
<div class="c" style="left:362px;width:79px;text-align:center;top:559px">5264</div>
<div class="c" style="left:442px;width:62px;text-align:center;top:559px">353</div>
<div class="c" style="left:505px;width:69px;text-align:right;top:559px">6,313,758</div>
<div class="c" style="left:579px;width:69px;text-align:right;top:559px">1,921,260</div>
<div class="c" style="left:653px;width:59px;text-align:right;top:559px">1620000</div>
<div class="c" style="left:716px;width:67px;text-align:right;top:559px">2,772,498</div>
<div class="c" style="left:790px;width:67px;text-align:right;top:559px">970,374</div>
<div class="c" style="left:864px;width:67px;text-align:right;top:559px">1,802,123</div>
<div class="c" style="left:1022px;width:77px;text-align:right;top:559px">633,385</div>
<div class="c" style="left:1106px;width:80px;text-align:right;top:559px">18448</div>
<div class="c" style="left:32px;width:92px;text-align:center;top:579px">9</div>
<div class="c" style="left:125px;width:70px;text-align:center;top:579px">11</div>
<div class="c" style="left:196px;width:62px;text-align:center;top:579px">2011</div>
<div class="c" style="left:259px;width:97px;text-align:right;top:579px">18,092</div>
<div class="c" style="left:362px;width:79px;text-align:center;top:579px">5474</div>
<div class="c" style="left:442px;width:62px;text-align:center;top:579px">353</div>
<div class="c" style="left:505px;width:69px;text-align:right;top:579px">6,386,476</div>
<div class="c" style="left:579px;width:69px;text-align:right;top:579px">1,998,111</div>
<div class="c" style="left:653px;width:59px;text-align:right;top:579px">1620000</div>
<div class="c" style="left:716px;width:67px;text-align:right;top:579px">2,768,365</div>
<div class="c" style="left:790px;width:67px;text-align:right;top:579px">968,928</div>
<div class="c" style="left:864px;width:67px;text-align:right;top:579px">1,799,437</div>
<div class="c" style="left:1022px;width:77px;text-align:right;top:579px">652,387</div>
<div class="c" style="left:1106px;width:80px;text-align:right;top:579px">19002</div>
<div class="c" style="left:32px;width:92px;text-align:center;top:599px">10</div>
<div class="c" style="left:125px;width:70px;text-align:center;top:599px">12</div>
<div class="c" style="left:196px;width:62px;text-align:center;top:599px">2012</div>
<div class="c" style="left:259px;width:97px;text-align:right;top:599px">17,428</div>
<div class="c" style="left:362px;width:79px;text-align:center;top:599px">5693</div>
<div class="c" style="left:442px;width:62px;text-align:center;top:599px">353</div>
<div class="c" style="left:505px;width:69px;text-align:right;top:599px">6,152,084</div>
<div class="c" style="left:579px;width:69px;text-align:right;top:599px">2,078,035</div>
<div class="c" style="left:653px;width:59px;text-align:right;top:599px">1620000</div>
<div class="c" style="left:716px;width:67px;text-align:right;top:599px">2,454,049</div>
<div class="c" style="left:790px;width:67px;text-align:right;top:599px">858,917</div>
<div class="c" style="left:864px;width:67px;text-align:right;top:599px">1,595,132</div>
<div class="c" style="left:938px;width:80px;text-align:right;top:599px">350,000</div>
<div class="c" style="left:1022px;width:77px;text-align:right;top:599px">671,958</div>
<div class="c" style="left:1106px;width:80px;text-align:right;top:599px">19572</div>
<div class="c" style="left:32px;width:92px;text-align:center;top:619px">11</div>
<div class="c" style="left:125px;width:70px;text-align:center;top:619px">13</div>
<div class="c" style="left:196px;width:62px;text-align:center;top:619px">2013</div>
<div class="c" style="left:259px;width:97px;text-align:right;top:619px">17,628</div>
<div class="c" style="left:362px;width:79px;text-align:center;top:619px">5921</div>
<div class="c" style="left:442px;width:62px;text-align:center;top:619px">349</div>
<div class="c" style="left:505px;width:69px;text-align:right;top:619px">6,152,172</div>
<div class="c" style="left:579px;width:69px;text-align:right;top:619px">2,161,157</div>
<div class="c" style="left:653px;width:59px;text-align:right;top:619px">1630000</div>
<div class="c" style="left:716px;width:67px;text-align:right;top:619px">2,361,015</div>
<div class="c" style="left:790px;width:67px;text-align:right;top:619px">826,355</div>
<div class="c" style="left:864px;width:67px;text-align:right;top:619px">1,534,660</div>
<div class="c" style="left:1022px;width:77px;text-align:right;top:619px">692,117</div>
<div class="c" style="left:1106px;width:80px;text-align:right;top:619px">20159</div>
<div class="c" style="left:32px;width:92px;text-align:center;top:639px">12</div>
<div class="c" style="left:125px;width:70px;text-align:center;top:639px">14</div>
<div class="c" style="left:196px;width:62px;text-align:center;top:639px">2014</div>
<div class="c" style="left:259px;width:97px;text-align:right;top:639px">17,831</div>
<div class="c" style="left:362px;width:79px;text-align:center;top:639px">6158</div>
<div class="c" style="left:442px;width:62px;text-align:center;top:639px">349</div>
<div class="c" style="left:505px;width:69px;text-align:right;top:639px">6,223,019</div>
<div class="c" style="left:579px;width:69px;text-align:right;top:639px">2,247,603</div>
<div class="c" style="left:653px;width:59px;text-align:right;top:639px">1630000</div>
<div class="c" style="left:716px;width:67px;text-align:right;top:639px">2,345,416</div>
<div class="c" style="left:790px;width:67px;text-align:right;top:639px">820,896</div>
<div class="c" style="left:864px;width:67px;text-align:right;top:639px">1,524,520</div>
<div class="c" style="left:1022px;width:77px;text-align:right;top:639px">712,880</div>
<div class="c" style="left:1106px;width:80px;text-align:right;top:639px">20764</div>
<div class="c" style="left:32px;width:92px;text-align:center;top:659px">13</div>
<div class="c" style="left:125px;width:70px;text-align:center;top:659px">15</div>
<div class="c" style="left:196px;width:62px;text-align:center;top:659px">2015</div>
<div class="c" style="left:259px;width:97px;text-align:right;top:659px">18,036</div>
<div class="c" style="left:362px;width:79px;text-align:center;top:659px">6404</div>
<div class="c" style="left:442px;width:62px;text-align:center;top:659px">349</div>
<div class="c" style="left:505px;width:69px;text-align:right;top:659px">6,294,564</div>
<div class="c" style="left:579px;width:69px;text-align:right;top:659px">2,337,507</div>
<div class="c" style="left:653px;width:59px;text-align:right;top:659px">1630000</div>
<div class="c" style="left:716px;width:67px;text-align:right;top:659px">2,327,057</div>
<div class="c" style="left:790px;width:67px;text-align:right;top:659px">814,470</div>
<div class="c" style="left:864px;width:67px;text-align:right;top:659px">1,512,587</div>
<div class="c" style="left:1022px;width:77px;text-align:right;top:659px">734,267</div>
<div class="c" style="left:1106px;width:80px;text-align:right;top:659px">21386</div>
<div class="c" style="left:32px;width:92px;text-align:center;top:679px">14</div>
<div class="c" style="left:125px;width:70px;text-align:center;top:679px">16</div>
<div class="c" style="left:196px;width:62px;text-align:center;top:679px">2016</div>
<div class="c" style="left:259px;width:97px;text-align:right;top:679px">18,243</div>
<div class="c" style="left:362px;width:79px;text-align:center;top:679px">6660</div>
<div class="c" style="left:442px;width:62px;text-align:center;top:679px">349</div>
<div class="c" style="left:505px;width:69px;text-align:right;top:679px">6,366,807</div>
<div class="c" style="left:579px;width:69px;text-align:right;top:679px">2,431,007</div>
<div class="c" style="left:653px;width:59px;text-align:right;top:679px">1630000</div>
<div class="c" style="left:716px;width:67px;text-align:right;top:679px">2,305,800</div>
<div class="c" style="left:790px;width:67px;text-align:right;top:679px">807,030</div>
<div class="c" style="left:864px;width:67px;text-align:right;top:679px">1,498,770</div>
<div class="c" style="left:1022px;width:77px;text-align:right;top:679px">756,295</div>
<div class="c" style="left:1106px;width:80px;text-align:right;top:679px">22028</div>
<div class="c" style="left:32px;width:92px;text-align:center;top:699px">15</div>
<div class="c" style="left:125px;width:70px;text-align:center;top:699px">17</div>
<div class="c" style="left:196px;width:62px;text-align:center;top:699px">2017</div>
<div class="c" style="left:259px;width:97px;text-align:right;top:699px">14,762</div>
<div class="c" style="left:362px;width:79px;text-align:center;top:699px">6927</div>
<div class="c" style="left:442px;width:62px;text-align:center;top:699px">349</div>
<div class="c" style="left:505px;width:69px;text-align:right;top:699px">5,151,938</div>
<div class="c" style="left:579px;width:69px;text-align:right;top:699px">2,528,248</div>
<div class="c" style="left:653px;width:59px;text-align:right;top:699px">1630000</div>
<div class="c" style="left:716px;width:67px;text-align:right;top:699px">993,690</div>
<div class="c" style="left:790px;width:67px;text-align:right;top:699px">347,792</div>
<div class="c" style="left:864px;width:67px;text-align:right;top:699px">645,899</div>
<div class="c" style="left:938px;width:80px;text-align:right;top:699px">750,000</div>
<div class="c" style="left:1022px;width:77px;text-align:right;top:699px">778,984</div>
<div class="c" style="left:1106px;width:80px;text-align:right;top:699px">22689</div>
<div class="c" style="left:32px;width:92px;text-align:center;top:719px">16</div>
<div class="c" style="left:125px;width:70px;text-align:center;top:719px">18</div>
<div class="c" style="left:196px;width:62px;text-align:center;top:719px">2018</div>
<div class="c" style="left:259px;width:97px;text-align:right;top:719px">14,932</div>
<div class="c" style="left:362px;width:79px;text-align:center;top:719px">7204</div>
<div class="c" style="left:442px;width:62px;text-align:center;top:719px">349</div>
<div class="c" style="left:505px;width:69px;text-align:right;top:719px">5,211,268</div>
<div class="c" style="left:579px;width:69px;text-align:right;top:719px">2,629,378</div>
<div class="c" style="left:653px;width:59px;text-align:right;top:719px">1710000</div>
<div class="c" style="left:716px;width:67px;text-align:right;top:719px">871,890</div>
<div class="c" style="left:790px;width:67px;text-align:right;top:719px">305,162</div>
<div class="c" style="left:864px;width:67px;text-align:right;top:719px">566,729</div>
<div class="c" style="left:1022px;width:77px;text-align:right;top:719px">802,353</div>
<div class="c" style="left:1106px;width:80px;text-align:right;top:719px">23370</div>
<div class="c" style="left:32px;width:92px;text-align:center;top:739px">17</div>
<div class="c" style="left:125px;width:70px;text-align:center;top:739px">19</div>
<div class="c" style="left:196px;width:62px;text-align:center;top:739px">2019</div>
<div class="c" style="left:259px;width:97px;text-align:right;top:739px">15,104</div>
<div class="c" style="left:362px;width:79px;text-align:center;top:739px">7492</div>
<div class="c" style="left:442px;width:62px;text-align:center;top:739px">349</div>
<div class="c" style="left:505px;width:69px;text-align:right;top:739px">5,271,296</div>
<div class="c" style="left:579px;width:69px;text-align:right;top:739px">2,734,553</div>
<div class="c" style="left:653px;width:59px;text-align:right;top:739px">1710000</div>
<div class="c" style="left:716px;width:67px;text-align:right;top:739px">826,743</div>
<div class="c" style="left:790px;width:67px;text-align:right;top:739px">289,360</div>
<div class="c" style="left:864px;width:67px;text-align:right;top:739px">537,383</div>
<div class="c" style="left:1022px;width:77px;text-align:right;top:739px">826,424</div>
<div class="c" style="left:1106px;width:80px;text-align:right;top:739px">24071</div>
<div class="c" style="left:32px;width:92px;text-align:center;top:759px">18</div>
<div class="c" style="left:125px;width:70px;text-align:center;top:759px">20</div>
<div class="c" style="left:196px;width:62px;text-align:center;top:759px">2020</div>
<div class="c" style="left:259px;width:97px;text-align:right;top:759px">15,278</div>
<div class="c" style="left:362px;width:79px;text-align:center;top:759px">7792</div>
<div class="c" style="left:442px;width:62px;text-align:center;top:759px">349</div>
<div class="c" style="left:505px;width:69px;text-align:right;top:759px">5,332,022</div>
<div class="c" style="left:579px;width:69px;text-align:right;top:759px">2,843,935</div>
<div class="c" style="left:653px;width:59px;text-align:right;top:759px">1710000</div>
<div class="c" style="left:716px;width:67px;text-align:right;top:759px">778,087</div>
<div class="c" style="left:790px;width:67px;text-align:right;top:759px">272,331</div>
<div class="c" style="left:864px;width:67px;text-align:right;top:759px">505,757</div>
<div class="c" style="left:1022px;width:77px;text-align:right;top:759px">851,217</div>
<div class="c" style="left:1106px;width:80px;text-align:right;top:759px">24793</div>
<div class="c" style="left:32px;width:92px;text-align:center;top:779px">19</div>
<div class="c" style="left:125px;width:70px;text-align:center;top:779px">21</div>
<div class="c" style="left:196px;width:62px;text-align:center;top:779px">2021</div>
<div class="c" style="left:259px;width:97px;text-align:right;top:779px">15,454</div>
<div class="c" style="left:362px;width:79px;text-align:center;top:779px">8103</div>
<div class="c" style="left:442px;width:62px;text-align:center;top:779px">349</div>
<div class="c" style="left:505px;width:69px;text-align:right;top:779px">5,393,446</div>
<div class="c" style="left:579px;width:69px;text-align:right;top:779px">2,957,692</div>
<div class="c" style="left:653px;width:59px;text-align:right;top:779px">1710000</div>
<div class="c" style="left:716px;width:67px;text-align:right;top:779px">725,754</div>
<div class="c" style="left:790px;width:67px;text-align:right;top:779px">254,014</div>
<div class="c" style="left:864px;width:67px;text-align:right;top:779px">471,740</div>
<div class="c" style="left:1022px;width:77px;text-align:right;top:779px">876,753</div>
<div class="c" style="left:1106px;width:80px;text-align:right;top:779px">25536</div>
<div class="b" style="left:652px;top:218px;width:1px;height:584px;background:repeating-linear-gradient(to bottom,#666 0 3px,transparent 3px 4px)"></div>
<div class="b" style="left:32px;top:216px;width:907px;height:2px;background:#3b8c1d"></div>
<div class="b" style="left:30px;top:296px;width:909px;height:443px;border:3px solid #3b8c1d"></div>
<div class="b" style="left:33px;top:299px;width:902px;height:1px;background:#fff"></div>
<div class="b" style="left:935px;top:299px;width:1px;height:437px;background:#fff"></div>
<div class="b" style="left:33px;top:299px;width:1px;height:58px;background:#fff"></div>
<div class="b" style="left:123px;top:299px;width:1px;height:58px;background:#fff"></div>
<div class="b" style="left:33px;top:356px;width:91px;height:1px;background:#fff"></div>
<div class="b" style="left:934px;top:734px;width:7px;height:7px;background:#3b8c1d;border:1px solid #fff"></div>
<div class="b" style="left:0px;top:802px;width:1194px;height:23px;background:#efefef;border-top:1px solid #dcdcdc"></div>
<svg class="b" style="left:14px;top:809px;" width="12" height="12" viewBox="0 0 12 12" fill="none"><path d="M1.500 1.200v9.200M9.900 1.500L4.500 5.800 9.900 10.100" stroke="#a0a0a0" stroke-width="1.700"/></svg>
<svg class="b" style="left:36px;top:809px;" width="9" height="12" viewBox="0 0 9 12" fill="none"><path d="M7.200 1.500L1.800 5.800 7.200 10.100" stroke="#a0a0a0" stroke-width="1.700"/></svg>
<svg class="b" style="left:59px;top:809px;" width="9" height="12" viewBox="0 0 9 12" fill="none"><path d="M1.800 1.500L7.200 5.800 1.800 10.100" stroke="#a0a0a0" stroke-width="1.700"/></svg>
<svg class="b" style="left:79px;top:809px;" width="12" height="12" viewBox="0 0 12 12" fill="none"><path d="M9.500 1.200v9.200M1.100 1.500L6.500 5.800 1.100 10.100" stroke="#a0a0a0" stroke-width="1.700"/></svg>
<div id="L35" class="t" style="left:116.70px;top:807.22px;font-size:11.5px;line-height:16px;color:#222;font-weight:400;letter-spacing:-0.292px;">Sheet1</div>
<svg class="b" style="left:160px;top:802px;" width="75" height="23" viewBox="0 0 75 23" fill="none"><path d="M6 0v17a6 6 0 0 0 6 6h51a6 6 0 0 0 6-6v-17z" fill="#fff"/><path d="M6.500 1v16a5.500 5.500 0 0 0 5.500 5.500M68.500 1v16a5.500 5.500 0 0 1-5.500 5.500" stroke="#dcdcdc" stroke-width="1"/></svg>
<div id="L36" class="t" style="left:177.90px;top:807.04px;font-size:12px;line-height:16px;color:#107a57;font-weight:700;letter-spacing:0.107px;">Sheet3</div>
<div id="L37" class="t" style="left:244.90px;top:807.22px;font-size:11.5px;line-height:16px;color:#222;font-weight:400;letter-spacing:-0.209px;">Sheet2</div>
<div class="b" style="left:293px;top:806px;width:1px;height:17px;background:#d0d0d0"></div>
<svg class="b" style="left:299px;top:810px;" width="12" height="12" viewBox="0 0 12 12" fill="none"><path d="M6 1v10M1 6h10" stroke="#1a1a1a" stroke-width="1.800"/></svg>
<div class="b" style="left:910px;top:811px;width:1px;height:8px;background:#999"></div>
<svg class="b" style="left:923px;top:811px;" width="8" height="8" viewBox="0 0 8 8" fill="none"><path d="M6.500 1v6l-5-3z" fill="#555"/></svg>
<div class="b" style="left:939px;top:811px;width:300px;height:8.5px;background:#c9c9c9;border-radius:4.250px"></div>
<svg class="b" style="left:0;top:0" width="1194" height="825" viewBox="0 0 1194 825" fill="none">
<rect x="450.6" y="42.2" width="86.7" height="31" rx="4.5" stroke="#c4202b" stroke-width="2.6"/>
<path d="M297.300 72 H342.900 Q344.600 72 344.800 74 L345.100 79.500 V151.500 L344.800 157.500 Q344.600 159.800 342.900 159.800 H297.300 Q295.500 159.800 295.300 157.500 L294.900 151.500 V79.500 L295.300 74 Q295.500 72 297.300 72z M296.700 81.200 v67.700 a2.500 2.500 0 0 0 2.500 2.500 h41.400 a2.500 2.500 0 0 0 2.500-2.500 v-67.700 a2.500 2.500 0 0 0-2.500-2.500 h-41.400 a2.500 2.500 0 0 0-2.500 2.500z" fill="#c91a21" fill-rule="evenodd"/>
<path d="M297.500 73.300 H342.700" stroke="#e0454a" stroke-width="1"/>
<g>
<polygon points="563.1,64.3 568.9,69.7 565.6,74.750 558.3,73.1" fill="#000"/>
<polygon points="622.9,85.6 627.1,94 617.6,122 612,117.2" fill="#000"/>
<polygon points="612,117.2 617.6,122 558.7,92.500 557.2,102 551.8,96.5 553,86.700" fill="#000"/>
<polygon points="540,72.4 563.1,64.3 558.3,73.1 622.9,85.600 612,117.200 553,86.700 551.8,96.5" fill="#f00"/>
</g>
<g>
<polygon points="262.5,157.6 253.2,159.3 262.2,167.5 191,204.3 211.7,233.8 224.3,235.6 200.8,203.5 271.2,165.8" fill="#000"/>
<polygon points="281.5,180.5 286.5,190.9 277.7,192.8 274.5,187.1" fill="#000"/>
<polygon points="294.1,162.9 262.5,157.6 271.2,165.8 200.8,203.5 224.3,235.6 281.5,180.5 286.5,190.900" fill="#f00"/>
</g>
</svg>
</body></html>
